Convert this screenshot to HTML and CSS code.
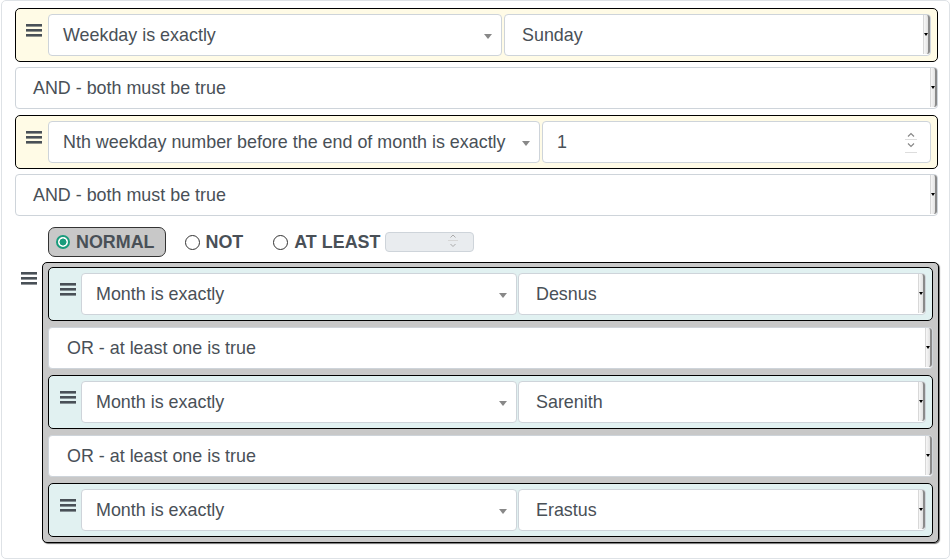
FILE: index.html
```html
<!DOCTYPE html>
<html>
<head>
<meta charset="utf-8">
<link rel="stylesheet" href="styles.css">
</head>
<body>
<div class="panel">
  <div class="cond yellow">
    <div class="handle"><svg width="16" height="13" viewBox="0 0 16 13"><rect y="0" width="16" height="2.6" fill="#495057"/><rect y="5" width="16" height="2.6" fill="#495057"/><rect y="10" width="16" height="2.6" fill="#495057"/></svg></div>
    <div class="sel w-weekday"><span class="txt">Weekday is exactly</span><span class="caret"></span></div>
    <div class="val"><span class="txt">Sunday</span><span class="drop"><span class="tri"></span></span></div>
  </div>
  <div class="conn"><span class="txt">AND - both must be true</span><span class="drop"><span class="tri"></span></span></div>
  <div class="cond yellow">
    <div class="handle"><svg width="16" height="13" viewBox="0 0 16 13"><rect y="0" width="16" height="2.6" fill="#495057"/><rect y="5" width="16" height="2.6" fill="#495057"/><rect y="10" width="16" height="2.6" fill="#495057"/></svg></div>
    <div class="sel w-nth"><span class="txt">Nth weekday number before the end of month is exactly</span><span class="caret"></span></div>
    <div class="num"><span class="txt">1</span><svg class="spin" width="14" height="24" viewBox="0 0 14 24"><path d="M4 5.5 L7 2.5 L10 5.5" fill="none" stroke="#888" stroke-width="1.2"/><line x1="1" y1="8.5" x2="13" y2="8.5" stroke="#ddd"/><path d="M4 12.5 L7 15.5 L10 12.5" fill="none" stroke="#888" stroke-width="1.2"/><line x1="1" y1="21.5" x2="13" y2="21.5" stroke="#ddd"/></svg></div>
  </div>
  <div class="conn"><span class="txt">AND - both must be true</span><span class="drop"><span class="tri"></span></span></div>

  <div class="grouprow">
    <div class="ghandle"><svg width="16" height="13" viewBox="0 0 16 13"><rect y="0" width="16" height="2.6" fill="#495057"/><rect y="5" width="16" height="2.6" fill="#495057"/><rect y="10" width="16" height="2.6" fill="#495057"/></svg></div>
    <div class="gcol">
      <div class="modes">
        <label class="mode active"><span class="radio on"></span>NORMAL</label>
        <label class="mode"><span class="radio"></span>NOT</label>
        <label class="mode"><span class="radio"></span>AT LEAST</label>
        <div class="mini"><svg width="12" height="18" viewBox="0 0 12 18"><path d="M3.5 4.5 L6 2 L8.5 4.5" fill="none" stroke="#aaa" stroke-width="1"/><line x1="1" y1="7.5" x2="11" y2="7.5" stroke="#d6d6d6"/><path d="M3.5 11 L6 13.5 L8.5 11" fill="none" stroke="#aaa" stroke-width="1"/></svg></div>
      </div>
      <div class="group">
        <div class="cond cyan">
          <div class="handle"><svg width="16" height="13" viewBox="0 0 16 13"><rect y="0" width="16" height="2.6" fill="#495057"/><rect y="5" width="16" height="2.6" fill="#495057"/><rect y="10" width="16" height="2.6" fill="#495057"/></svg></div>
          <div class="sel w-month"><span class="txt">Month is exactly</span><span class="caret"></span></div>
          <div class="val tight"><span class="txt">Desnus</span><span class="drop"><span class="tri"></span></span></div>
        </div>
        <div class="conn"><span class="txt">OR - at least one is true</span><span class="drop"><span class="tri"></span></span></div>
        <div class="cond cyan">
          <div class="handle"><svg width="16" height="13" viewBox="0 0 16 13"><rect y="0" width="16" height="2.6" fill="#495057"/><rect y="5" width="16" height="2.6" fill="#495057"/><rect y="10" width="16" height="2.6" fill="#495057"/></svg></div>
          <div class="sel w-month"><span class="txt">Month is exactly</span><span class="caret"></span></div>
          <div class="val tight"><span class="txt">Sarenith</span><span class="drop"><span class="tri"></span></span></div>
        </div>
        <div class="conn"><span class="txt">OR - at least one is true</span><span class="drop"><span class="tri"></span></span></div>
        <div class="cond cyan">
          <div class="handle"><svg width="16" height="13" viewBox="0 0 16 13"><rect y="0" width="16" height="2.6" fill="#495057"/><rect y="5" width="16" height="2.6" fill="#495057"/><rect y="10" width="16" height="2.6" fill="#495057"/></svg></div>
          <div class="sel w-month"><span class="txt">Month is exactly</span><span class="caret"></span></div>
          <div class="val tight"><span class="txt">Erastus</span><span class="drop"><span class="tri"></span></span></div>
        </div>
      </div>
    </div>
  </div>
</div>
</body>
</html>
```

FILE: styles.css
```css
* { box-sizing: border-box; }
html, body { margin: 0; padding: 0; background: #fff; }
body {
  font-family: "Liberation Sans", Arial, sans-serif;
  font-size: 17.9px;
  color: #495057;
}
.panel {
  margin-left: 1px;
  width: 949px;
  height: 559px;
  border: 1px solid #dee2e6;
  border-radius: 5px;
  padding: 7px 11px 0 13px;
}
.cond {
  display: flex;
  align-items: flex-start;
  border: 1px solid #000;
  border-radius: 5px;
  padding: 5px 6px 5px 0;
}
.yellow { background: #fffbe6; }
.cyan { background: #e1f1f1; }
.handle {
  width: 32px;
  flex: none;
  padding: 10px 0 0 10px;
  line-height: 0;
}
.sel, .val, .conn, .num {
  height: 42px;
  background: #fff;
  border: 1px solid #ced4da;
  border-radius: 4px;
  display: flex;
  align-items: center;
  white-space: nowrap;
}
.sel { flex: none; padding-left: 14px; padding-right: 9px; }
.w-weekday { width: 454px; }
.w-nth { width: 492px; }
.w-month { width: 436px; }
.txt { flex: 1; }
.caret {
  width: 0; height: 0;
  border-left: 4px solid transparent;
  border-right: 4px solid transparent;
  border-top: 5px solid #888;
  margin-top: 2px;
}
.val { flex: 1; margin-left: 2px; padding-left: 17px; padding-right: 0; }
.val.tight { margin-left: 1px; }
.num { flex: 1; margin-left: 2px; padding-left: 14px; padding-right: 12px; }
.spin { flex: none; margin-top: 2px; }
.conn {
  margin: 5px 0 6px;
  padding-left: 17px;
}
.drop {
  flex: none;
  align-self: stretch;
  width: 7px;
  margin: 0 0 1px;
  border-left: 1px solid #d8d8d8;
  border-right: 2px solid #8a8a8a;
  border-radius: 0 3px 3px 0;
  background: linear-gradient(90deg, #f7f7f7, #e2e2e2);
  display: flex;
  align-items: center;
  justify-content: center;
}
.tri {
  width: 0; height: 0;
  border-left: 2.5px solid transparent;
  border-right: 2.5px solid transparent;
  border-top: 3px solid #000;
}
.grouprow {
  display: flex;
  align-items: flex-start;
}
.ghandle {
  width: 27px;
  flex: none;
  padding: 50px 0 0 6px;
  line-height: 0;
}
.gcol { flex: 1; margin-right: -1px; }
.modes {
  display: flex;
  align-items: center;
  padding: 5px 0 0 6px;
  height: 35px;
}
.mode {
  display: flex;
  align-items: center;
  font-weight: bold;
  height: 30px;
  border: 1px solid transparent;
  border-radius: 7px;
  padding: 1px 10px 0 7px;
}
.mode.active {
  background: #c8c8c8;
  border-color: #333;
  margin-right: 18px;
}
.mode + .mode { padding-left: 0; }
.mode:nth-child(2) { margin-right: 18px; }
.mode:nth-child(3) { padding-right: 4px; margin-right: 0; }
.radio {
  width: 15px; height: 15px;
  border-radius: 50%;
  border: 1.6px solid #333;
  background: #fff;
  margin-right: 6px;
  margin-top: -1px;
  flex: none;
}
.radio.on {
  width: 14px; height: 14px;
  border: 2px solid #1a9c7c;
  background: radial-gradient(circle, #1a9c7c 0 3.2px, #fff 3.8px);
}
.mini {
  width: 89px;
  height: 20px;
  background: #e9ecef;
  border: 1px solid #ced4da;
  border-radius: 4px;
  display: flex;
  align-items: center;
  justify-content: flex-end;
  padding-right: 14px;
}
.group {
  margin-top: 5px;
  background: #c8c8c8;
  border: 1px solid #000;
  border-radius: 5px;
  box-shadow: 1px 1px 1px rgba(0,0,0,0.55);
  padding: 4px 5px 5px 5px;
}
.group .cond { padding-right: 6px; }
.group .handle { padding-left: 11px; }
.group .conn { margin: 6px 0 6px; padding-left: 18px; }
```
